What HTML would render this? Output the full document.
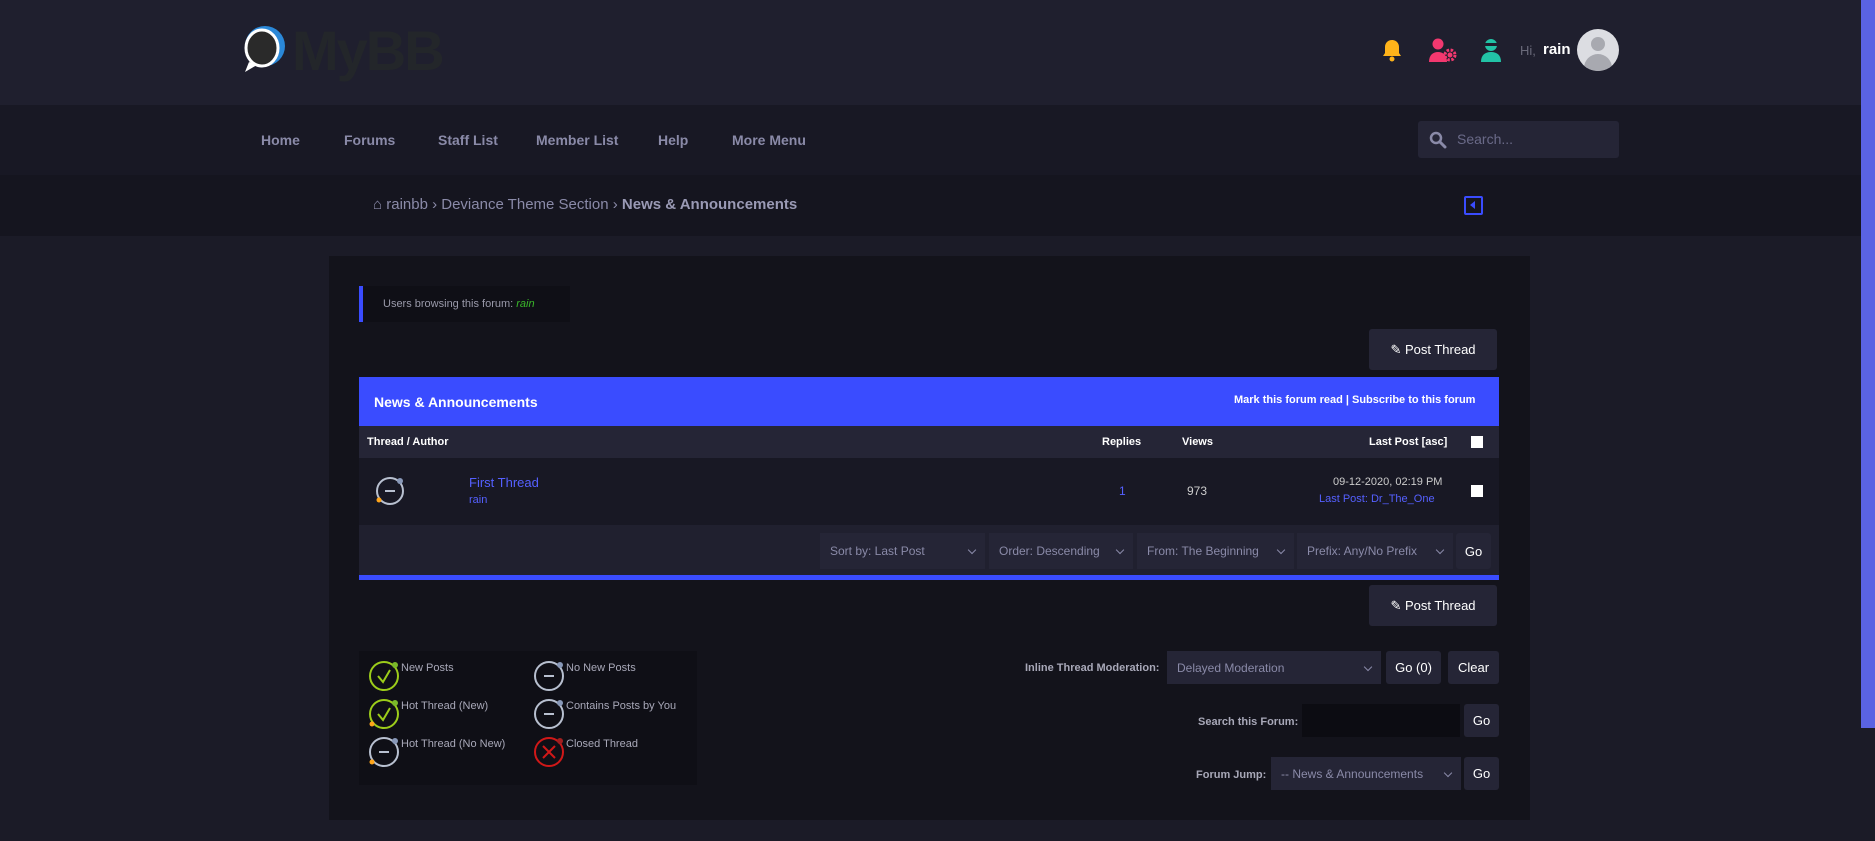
<!DOCTYPE html>
<html><head><meta charset="utf-8"><style>
*{margin:0;padding:0;box-sizing:border-box}
body{width:1875px;height:841px;background:#1b1b27;font-family:"Liberation Sans",sans-serif;position:relative;overflow:hidden;color:#ccc}
.a{position:absolute}
.hdr{left:0;top:0;width:1875px;height:105px;background:#1f1f2e}
.nav{left:0;top:105px;width:1875px;height:70px;background:#181824}
.bc{left:0;top:175px;width:1875px;height:61px;background:#15151f}
.nav span{position:absolute;top:27px;color:#8a8aa8;font-size:14px;font-weight:bold}
.box{left:329px;top:256px;width:1201px;height:564px;background:#13131b}
.btn{background:#252536;color:#fff;font-size:13px;display:flex;align-items:center;justify-content:center;border-radius:3px}
.sel{background:#252536;color:#8a8aa8;font-size:12px;display:flex;align-items:center;padding-left:10px}
.sel:after{content:"";position:absolute;right:10px;top:50%;margin-top:-4px;width:5px;height:5px;border-right:1px solid #8a8aa8;border-bottom:1px solid #8a8aa8;transform:rotate(45deg)}
.lg{font-size:11px;color:#a8a8b8}
.lbl{font-size:11px;font-weight:bold;color:#a8a8b8}
</style></head><body>
<div class="a hdr"></div>
<div class="a nav">
<span style="left:261px">Home</span><span style="left:344px">Forums</span><span style="left:438px">Staff List</span><span style="left:536px">Member List</span><span style="left:658px">Help</span><span style="left:732px">More Menu</span>
<div class="a" style="left:1418px;top:16px;width:201px;height:37px;background:#252536;border-radius:3px"></div>
<svg class="a" style="left:1429px;top:26px" width="18" height="18" viewBox="0 0 18 18"><circle cx="7" cy="7" r="5" fill="none" stroke="#8a8aa8" stroke-width="2.5"/><path d="M11 11l5 5" stroke="#8a8aa8" stroke-width="3" stroke-linecap="round"/></svg>
<div class="a" style="left:1457px;top:26px;font-size:14px;color:#6a6a88">Search...</div>
</div>
<div class="a bc"></div>
<svg class="a" style="left:237px;top:24px" width="60" height="52" viewBox="0 0 60 52"><circle cx="28" cy="22" r="20" fill="#2a88d8"/><ellipse cx="25" cy="24" rx="16" ry="18" fill="#2a2a2a" stroke="#fff" stroke-width="3"/><path d="M12 38l-4 10 12-7" fill="#fff"/></svg>
<div class="a" style="left:292px;top:18px;font-size:56px;color:#23262a;font-weight:bold;letter-spacing:-2px">MyBB</div>
<svg class="a" style="left:1381px;top:38px" width="22" height="24" viewBox="0 0 22 24"><path d="M11 2c-4 0-7 3-7 7v6l-2 3h18l-2-3V9c0-4-3-7-7-7z" fill="#ffb31a"/><circle cx="11" cy="21" r="2.5" fill="#ffb31a"/></svg>
<svg class="a" style="left:1429px;top:38px" width="28" height="24" viewBox="0 0 28 24"><circle cx="9" cy="6" r="5.5" fill="#f2386f"/><path d="M0 24c0-7 4-10 9-10s9 3 9 10z" fill="#f2386f"/><circle cx="21" cy="17" r="5" fill="none" stroke="#f2386f" stroke-width="3" stroke-dasharray="2.5 1.5"/><circle cx="21" cy="17" r="2.5" fill="#f2386f"/></svg>
<svg class="a" style="left:1480px;top:38px" width="22" height="24" viewBox="0 0 22 24"><circle cx="11" cy="7" r="6" fill="#22c3a6"/><rect x="4" y="5" width="14" height="3" fill="#1f1f2e"/><path d="M1 24c0-7 4-10 10-10s10 3 10 10z" fill="#22c3a6"/></svg>
<div class="a" style="left:1520px;top:43px;font-size:13px;color:#6a6a7a">Hi,</div>
<div class="a" style="left:1543px;top:41px;font-size:15px;color:#fff;font-weight:bold">rain</div>
<div class="a" style="left:1577px;top:29px;width:42px;height:42px;border-radius:50%;background:#dcdde2;overflow:hidden"><div class="a" style="left:14px;top:8px;width:14px;height:14px;border-radius:50%;background:#a8a9b0"></div><div class="a" style="left:7px;top:25px;width:28px;height:18px;border-radius:14px 14px 0 0;background:#a8a9b0"></div></div>
<div class="a" style="left:1861px;top:0;width:14px;height:728px;background:#5a63e3"></div>
<div class="a" style="left:373px;top:196px;font-size:15px;color:#8a8aa8">&#8962; rainbb › Deviance Theme Section › <b style="color:#9a9ab5">News &amp; Announcements</b></div>
<div class="a" style="left:1464px;top:196px;width:19px;height:19px;border:2px solid #3a4cff;border-radius:2px"></div>
<div class="a" style="left:1470px;top:201px;width:0;height:0;border-top:4px solid transparent;border-bottom:4px solid transparent;border-right:5px solid #3a4cff"></div>
<div class="a box"></div>
<div class="a" style="left:359px;top:286px;width:211px;height:36px;background:#0f0f16;border-left:4px solid #3a4cff;font-size:11px;color:#9a9aaa;padding:12px 0 0 20px">Users browsing this forum: <i style="color:#3ab72a">rain</i></div>
<div class="a btn" style="left:1369px;top:329px;width:128px;height:41px">✎&nbsp;Post Thread</div>
<div class="a" style="left:359px;top:377px;width:1140px;height:49px;background:#3a4cff"></div>
<div class="a" style="left:374px;top:394px;font-size:14px;color:#fff;font-weight:bold">News &amp; Announcements</div>
<div class="a" style="left:1234px;top:394px;font-size:11px;color:#fff;font-weight:bold">Mark this forum read | Subscribe to this forum</div>
<div class="a" style="left:359px;top:426px;width:1140px;height:32px;background:#252536"></div>
<div class="a lbl" style="left:367px;top:436px;color:#fff">Thread / Author</div>
<div class="a lbl" style="left:1102px;top:436px;color:#fff">Replies</div>
<div class="a lbl" style="left:1182px;top:436px;color:#fff">Views</div>
<div class="a lbl" style="left:1369px;top:436px;color:#fff">Last Post [asc]</div>
<div class="a" style="left:1471px;top:436px;width:12px;height:12px;background:#fff"></div>
<div class="a" style="left:359px;top:458px;width:1140px;height:67px;background:#181824"></div>
<svg class="a" style="left:373px;top:474px" width="34" height="34" viewBox="0 0 34 34"><circle cx="17" cy="17" r="13" fill="none" stroke="#b8c0d0" stroke-width="2"/><path d="M12 17h10" stroke="#b8c0d0" stroke-width="2"/><circle cx="27" cy="7" r="3" fill="#8898b8"/><circle cx="6" cy="26" r="2.5" fill="#ffa51a"/></svg>
<div class="a" style="left:469px;top:475px;font-size:13px;color:#5560ff">First Thread</div>
<div class="a" style="left:469px;top:494px;font-size:11px;color:#5560ff">rain</div>
<div class="a" style="left:1119px;top:484px;font-size:12px;color:#5560ff">1</div>
<div class="a" style="left:1187px;top:484px;font-size:12px;color:#ccc">973</div>
<div class="a" style="left:1333px;top:476px;font-size:11px;color:#ccc">09-12-2020, 02:19 PM</div>
<div class="a" style="left:1319px;top:493px;font-size:11px;color:#5560ff">Last Post: Dr_The_One</div>
<div class="a" style="left:1471px;top:485px;width:12px;height:12px;background:#fff"></div>
<div class="a" style="left:359px;top:525px;width:1140px;height:50px;background:#20202f"></div>
<div class="a sel" style="left:820px;top:533px;width:165px;height:36px">Sort by: Last Post</div>
<div class="a sel" style="left:989px;top:533px;width:144px;height:36px">Order: Descending</div>
<div class="a sel" style="left:1137px;top:533px;width:157px;height:36px">From: The Beginning</div>
<div class="a sel" style="left:1297px;top:533px;width:156px;height:36px">Prefix: Any/No Prefix</div>
<div class="a btn" style="left:1456px;top:533px;width:35px;height:36px">Go</div>
<div class="a" style="left:359px;top:575px;width:1140px;height:5px;background:#3a4cff"></div>
<div class="a btn" style="left:1369px;top:585px;width:128px;height:41px">✎&nbsp;Post Thread</div>
<div class="a" style="left:359px;top:651px;width:338px;height:134px;background:#0f0f16"></div>
<svg class="a" style="left:366px;top:658px;" width="340" height="125" viewBox="0 0 340 125">
<g fill="none" stroke-width="2">
<circle cx="18" cy="18" r="14" stroke="#9ccc1a"/><path d="M12 18l5 6 7-12" stroke="#9ccc1a"/>
<circle cx="18" cy="56" r="14" stroke="#9ccc1a"/><path d="M12 56l5 6 7-12" stroke="#9ccc1a"/>
<circle cx="18" cy="94" r="14" stroke="#b8c0d0"/><path d="M13 94h10" stroke="#b8c0d0"/>
<circle cx="183" cy="18" r="14" stroke="#b8c0d0"/><path d="M178 18h10" stroke="#b8c0d0"/>
<circle cx="183" cy="56" r="14" stroke="#b8c0d0"/><path d="M178 56h10" stroke="#b8c0d0"/>
<circle cx="183" cy="94" r="14" stroke="#d01818"/><path d="M177 88l12 12M189 88l-12 12" stroke="#d01818"/>
</g>
<circle cx="29" cy="7" r="3" fill="#7ab82a"/><circle cx="29" cy="45" r="3" fill="#7ab82a"/><circle cx="29" cy="83" r="3" fill="#8898b8"/>
<circle cx="6" cy="66" r="2.5" fill="#ffa51a"/><circle cx="6" cy="104" r="2.5" fill="#ffa51a"/>
<circle cx="194" cy="7" r="3" fill="#8898b8"/><circle cx="194" cy="45" r="3" fill="#8898b8"/><circle cx="194" cy="83" r="3" fill="#a02020"/>
</svg>
<div class="a lg" style="left:401px;top:662px">New Posts</div>
<div class="a lg" style="left:401px;top:700px">Hot Thread (New)</div>
<div class="a lg" style="left:401px;top:738px">Hot Thread (No New)</div>
<div class="a lg" style="left:566px;top:662px">No New Posts</div>
<div class="a lg" style="left:566px;top:700px">Contains Posts by You</div>
<div class="a lg" style="left:566px;top:738px">Closed Thread</div>
<div class="a lbl" style="left:1025px;top:662px">Inline Thread Moderation:</div>
<div class="a sel" style="left:1167px;top:651px;width:214px;height:33px">Delayed Moderation</div>
<div class="a btn" style="left:1386px;top:651px;width:55px;height:33px">Go (0)</div>
<div class="a btn" style="left:1448px;top:651px;width:51px;height:33px">Clear</div>
<div class="a lbl" style="left:1198px;top:716px">Search this Forum:</div>
<div class="a" style="left:1302px;top:704px;width:158px;height:33px;background:#0c0c12"></div>
<div class="a btn" style="left:1464px;top:704px;width:35px;height:33px">Go</div>
<div class="a lbl" style="left:1196px;top:769px">Forum Jump:</div>
<div class="a sel" style="left:1271px;top:757px;width:190px;height:33px">-- News &amp; Announcements</div>
<div class="a btn" style="left:1464px;top:757px;width:35px;height:33px">Go</div>
</body></html>
